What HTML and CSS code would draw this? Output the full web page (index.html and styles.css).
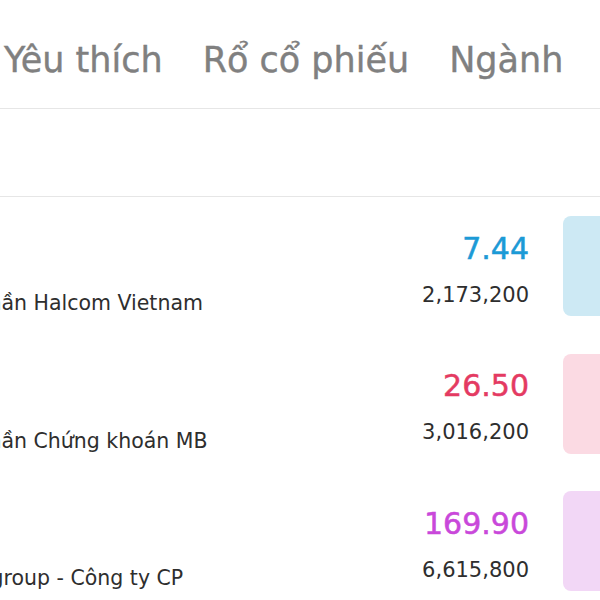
FILE: index.html
```html
<!DOCTYPE html>
<html lang="vi">
<head>
<meta charset="utf-8">
<title>Bảng giá</title>
<link rel="stylesheet" href="styles.css">
</head>
<body>
<div class="app">
  <nav class="tabs">
    <span class="tab">Yêu thích</span>
    <span class="tab">Rổ cổ phiếu</span>
    <span class="tab">Ngành</span>
  </nav>
  <div class="filter-bar"></div>
  <div class="list">
    <div class="row">
      <div class="info">
        <div class="ticker">HID</div>
        <div class="name">Công ty Cổ phần Halcom Vietnam</div>
      </div>
      <div class="quote">
        <div class="price up">7.44</div>
        <div class="vol">2,173,200</div>
      </div>
      <div class="badge badge-up"></div>
    </div>
    <div class="row">
      <div class="info">
        <div class="ticker">MBS</div>
        <div class="name">Công ty Cổ phần Chứng khoán MB</div>
      </div>
      <div class="quote">
        <div class="price down">26.50</div>
        <div class="vol">3,016,200</div>
      </div>
      <div class="badge badge-down"></div>
    </div>
    <div class="row">
      <div class="info">
        <div class="ticker">VIC</div>
        <div class="name">Tập đoàn Vingroup - Công ty CP</div>
      </div>
      <div class="quote">
        <div class="price ceil">169.90</div>
        <div class="vol">6,615,800</div>
      </div>
      <div class="badge badge-ceil"></div>
    </div>
  </div>
</div>
</body>
</html>
```
FILE: styles.css
```css
html, body {
  margin: 0;
  padding: 0;
  overflow: hidden;
  background: #ffffff;
}

body {
  font-family: "DejaVu Sans", "Liberation Sans", sans-serif;
  color: #333333;
}

.app {
  width: 600px;
  height: 600px;
  overflow: hidden;
}

.tabs {
  display: flex;
  gap: 40px;
  height: 109px;
  box-sizing: border-box;
  padding: 40px 0 0 4px;
  border-bottom: 1px solid #e6e6e6;
  white-space: nowrap;
}

.tab {
  font-size: 35px;
  line-height: 40px;
  color: #808080;
  -webkit-text-stroke: 0.4px #808080;
}

.filter-bar {
  height: 88px;
  box-sizing: border-box;
  border-bottom: 1px solid #e6e6e6;
}

.list {
  width: 817px;
  margin-left: -144px;
}

.row {
  display: flex;
  height: 137.5px;
  box-sizing: border-box;
  padding-top: 19px;
}

.info {
  flex: 1;
  min-width: 0;
  padding-top: 24px;
  white-space: nowrap;
}

.ticker {
  font-size: 20px;
  line-height: 24px;
  font-weight: bold;
  color: #222222;
}

.name {
  margin-top: 27px;
  font-size: 20.5px;
  line-height: 24px;
  color: #2e2e2e;
}

.quote {
  margin-top: 14.6px;
  text-align: right;
  white-space: nowrap;
}

.price {
  font-size: 30px;
  line-height: 36px;
  -webkit-text-stroke: 0.5px currentColor;
}

.vol {
  margin-top: 14px;
  font-size: 21px;
  line-height: 28px;
  color: #2e2e2e;
}

.up { color: #1c9ad6; }
.down { color: #e43a62; }
.ceil { color: #c948da; }

.badge {
  flex-shrink: 0;
  width: 110px;
  height: 100px;
  margin-left: 34px;
  border-radius: 8px;
}

.badge-up { background: #cde9f4; }
.badge-down { background: #fbdae3; }
.badge-ceil { background: #f2d7f6; }
```
